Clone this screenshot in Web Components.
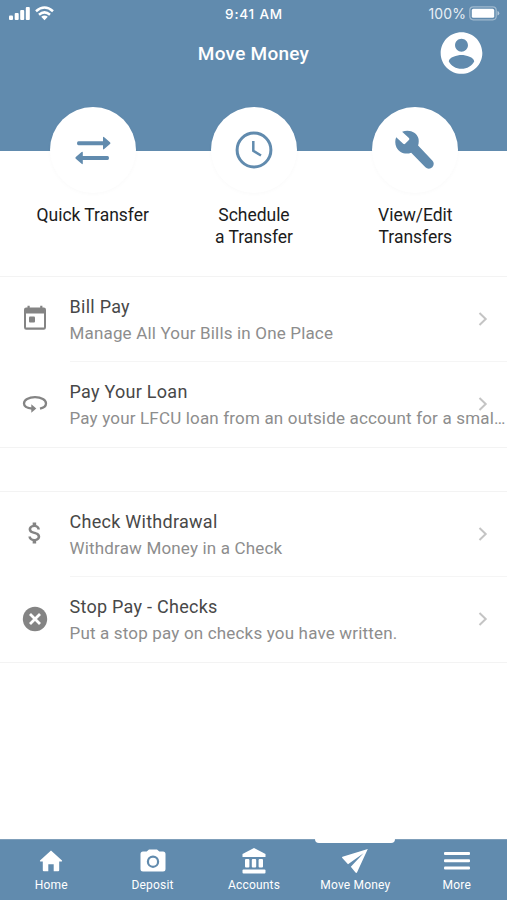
<!DOCTYPE html>
<html lang="en">
<head>
<meta charset="utf-8">
<title>Move Money</title>
<style>
html, body { margin: 0; height: 100%; }
body { background: #fff; font-family: Roboto, "Liberation Sans", sans-serif; overflow: hidden; }
</style>
</head>
<body>
<money-app></money-app>

<script>
const BLUE = '#618bae';

function define(name, html) {
  const template = document.createElement('template');
  template.innerHTML = html;
  customElements.define(name, class extends HTMLElement {
    constructor() {
      super();
      this.attachShadow({ mode: 'open' }).append(template.content.cloneNode(true));
    }
  });
}

define('status-bar', `
<style>
  :host { display: grid; grid-template-columns: 1fr auto 1fr; align-items: center; height: 28px; padding: 0 7px 0 8px; box-sizing: border-box; color: #fff; font: 500 13px/28px Inter, sans-serif; }
  .left, .right { display: flex; align-items: center; }
  .left { gap: 4px; }
  .right { justify-content: flex-end; gap: 3px; font-weight: 400; font-size: 14px; letter-spacing: .1px; color: #e8eff5; }
  .time { font-weight: 500; font-size: 13.500px; letter-spacing: .8px; }
  svg { display: block; margin-bottom: 2px; }
</style>
<div class="left">
  <svg width="23" height="15" viewBox="0 0 23 15" fill="#fff"><rect x="1" y="9.5" width="4" height="4.5" rx="1"/><rect x="6.7" y="7" width="4" height="7" rx="1"/><rect x="12.2" y="4" width="4" height="10" rx="1"/><rect x="17.8" y="1" width="4" height="13" rx="1"/></svg>
  <svg width="19" height="15" viewBox="0 0 19 15" fill="none" stroke="#fff" stroke-width="2.5"><path d="M1 5.300Q9.500-2.300 18 5.300M4 8.800Q9.500 4 15 8.800"/><path d="M6.2 10.8Q9.5 8.1 12.8 10.8L9.5 14.3Z" fill="#fff" stroke="none"/></svg>
</div>
<div class="time">9:41 AM</div>
<div class="right"><span>100%</span>
  <svg width="31" height="15" viewBox="0 0 31 15"><rect x=".8" y=".8" width="26.4" height="13" rx="3.5" fill="none" stroke="#9fb9ce" stroke-width="1.2"/><rect x="2.8" y="2.8" width="22.4" height="9" rx="1.6" fill="#fff"/><path d="M28.5 5v4.6q1.8-.6 1.8-2.3T28.5 5" fill="#b4c8d9"/></svg>
</div>`);

define('page-header', `
<style>
  :host { display: block; height: 151px; background: ${BLUE}; color: #fff; }
  .bar { display: grid; grid-template-columns: 1fr auto 1fr; align-items: center; height: 50px; padding: 0 20px; }
  h1 { margin: 0; font-weight: 500; font-size: 19px; line-height: 26px; letter-spacing: .25px; }
  svg { display: block; justify-self: end; margin-bottom: 1px; }
</style>
<status-bar></status-bar>
<div class="bar"><span></span><h1><slot></slot></h1>
  <svg width="51" height="50" viewBox="0 0 24 24" fill="#fff"><path d="M12 2C6.48 2 2 6.48 2 12s4.48 10 10 10 10-4.480 10-10S17.520 2 12 2zm0 3.200c1.700 0 3.100 1.400 3.100 3.100s-1.400 3.100-3.100 3.100-3.100-1.400-3.100-3.100 1.400-3.100 3.100-3.100zM12 19.600c-2.700 0-5-1.400-6.100-3.500 0-2 4-3.100 6.100-3.100s6.100 1.100 6.100 3.100c-1.100 2.100-3.400 3.500-6.100 3.500z"/></svg>
</div>`);

define('quick-action', `
<style>
  :host { display: flex; flex-direction: column; align-items: center; color: #1c1c1c; }
  .disc { display: grid; place-items: center; width: 86px; height: 86px; border-radius: 50%; background: #fff; box-shadow: 0 1px 4px rgba(0,0,0,.025); color: ${BLUE}; }
  .label { margin-top: 11px; font-size: 17.500px; line-height: 22px; text-align: center; letter-spacing: -.03px; }
</style>
<div class="disc"><slot name="icon"></slot></div>
<div class="label"><slot></slot></div>`);

define('menu-group', `
<style>
  :host { display: block; border-top: 1px solid #f3f3f3; border-bottom: 1px solid #f3f3f3; box-sizing: border-box; height: 172px; }
</style>
<slot></slot>`);

define('menu-row', `
<style>
  :host { display: grid; grid-template-columns: 69.500px minmax(0, 1fr); height: 85.500px; box-sizing: border-box; }
  .icon { display: grid; place-items: center; color: #848484; padding-bottom: 2px; }
  .body { display: grid; grid-template-columns: minmax(0, 1fr) 48px; grid-template-rows: 27px 26px; align-content: start; padding-top: 16px; }
  :host([divided]) .body { border-bottom: 1px solid #f5f5f5; }
  .title { color: #484848; font-size: 18px; line-height: 27px; letter-spacing: .27px; }
  .detail { grid-column: 1 / 3; grid-row: 2; color: #8d8d8d; font-size: 17px; line-height: 26px; letter-spacing: .17px; white-space: nowrap; }
  .chevron { grid-column: 2; grid-row: 1 / 3; justify-self: center; align-self: center; margin-bottom: 1px; }
</style>
<div class="icon"><slot name="icon"></slot></div>
<div class="body">
  <div class="title"><slot name="title"></slot></div>
  <div class="detail"><slot></slot></div>
  <svg class="chevron" width="12" height="16" viewBox="0 0 12 16" fill="none" stroke="#c4c4c4" stroke-width="2"><path d="M2.500 2l6.200 6-6.200 6"/></svg>
</div>`);

define('nav-item', `
<style>
  :host { position: relative; display: flex; flex-direction: column; align-items: center; padding: 8px 0 0 1px; color: #fff; }
  .icon { display: grid; place-items: center; height: 28px; }
  .label { font-size: 12px; line-height: 16px; margin-top: 2px; letter-spacing: .2px; }
  :host([active])::before { content: ""; position: absolute; top: -1px; left: 50%; width: 80px; height: 5px; margin-left: -40px; background: #fff; border-radius: 0 0 4px 4px; }
</style>
<div class="icon"><slot name="icon"></slot></div>
<div class="label"><slot></slot></div>`);

define('tab-bar', `
<style>
  :host { display: grid; grid-template-columns: repeat(5, 1fr); height: 61px; background: ${BLUE}; box-shadow: inset 0 1px #7f9fba; }
</style>
<slot></slot>`);

define('money-app', `
<style>
  :host { display: flex; flex-direction: column; width: 507px; height: 900px; }
  .actions { display: grid; grid-template-columns: repeat(3, 1fr); height: 168.500px; margin-top: -44px; padding: 0 11px 0 12px; flex: none; }
  page-header, menu-group { flex: none; }
  menu-group + menu-group { margin-top: 43px; }
  tab-bar { margin-top: auto; }
  svg { display: block; }
</style>
<page-header>Move Money</page-header>
<div class="actions">
  <quick-action>
    <svg slot="icon" width="38" height="30" viewBox="0 0 38 30" fill="currentColor"><path d="M3 8.200q0-1.900 1.500-1.900H29V2.800q0-1.500 1.200-.6L36 7.300q1 .9 0 1.800l-5.800 5q-1.200 1-1.200-.6V10.200H4.500Q3 10.200 3 8.200zM35 23q0-1.900-1.500-1.900H8.800v-3.500q0-1.500-1.200-.6L1.800 22q-1 .9 0 1.800l5.800 5q1.200.9 1.200-.6v-3.300h24.700q1.500 0 1.500-1.900z"/></svg>
    Quick Transfer</quick-action>
  <quick-action>
    <svg slot="icon" width="38" height="38" viewBox="0 0 38 38" fill="none" stroke="currentColor"><circle cx="19" cy="19" r="16.900" stroke-width="3"/><path d="M18.300 10v9.800l7.700 4.700" stroke-width="2.500"/></svg>
    Schedule<br>a Transfer</quick-action>
  <quick-action>
    <svg slot="icon" width="42" height="42" viewBox="0 0 42 42" fill="currentColor"><path d="M2.200 8.300l7 6.500q1 .8 1.900 0l3.800-3.900q.9-1 0-1.900L8.100 2.800C15-.2 22.500 3 24.300 9c.7 2.500.5 5-.2 7.600l14.200 14.800a4.800 4.800 0 0 1-6.900 6.900L17.200 23.700C11.500 26 5 23.600 2.500 18.500 1 15.300.8 11.500 2.200 8.300z"/></svg>
    View/Edit<br>Transfers</quick-action>
</div>
<menu-group>
  <menu-row divided>
    <svg slot="icon" width="24" height="26" viewBox="0 0 24 26" fill="currentColor"><path fill-rule="evenodd" d="M3.200 2.500h1.300V.7h2.200v1.800h10.500V.7h2.200v1.800h1.300q2.300 0 2.300 2.300v17.500q0 2.500-2.300 2.500H3.200Q1 24.800 1 22.300V4.800q0-2.300 2.200-2.300zM3 8.500v14h18v-14z"/><rect x="6" y="11.500" width="6" height="6" rx="1"/></svg>
    <span slot="title">Bill Pay</span>Manage All Your Bills in One Place</menu-row>
  <menu-row>
    <svg slot="icon" width="26" height="18" viewBox="0 0 26 18" fill="none" stroke="currentColor" stroke-width="2.300"><path d="M18 13.600c4-1 6-2.900 6-5.200 0-3.500-4.600-6.200-11-6.200S2 4.900 2 8.400c0 2.700 3.500 4.700 8.400 5.200"/><path d="M9.300 9.200v8.600l5-4.300z" fill="currentColor" stroke="none"/></svg>
    <span slot="title">Pay Your Loan</span>Pay your LFCU loan from an outside account for a smal…</menu-row>
</menu-group>
<menu-group>
  <menu-row divided>
    <svg slot="icon" width="28" height="28" viewBox="0 0 24 24" fill="currentColor"><path d="M11.800 10.900c-2.270-.59-3-1.200-3-2.150 0-1.090 1.010-1.850 2.700-1.850 1.780 0 2.440.85 2.500 2.100h2.210c-.07-1.720-1.120-3.300-3.210-3.810V3h-3v2.160c-1.940.42-3.500 1.680-3.500 3.610 0 2.310 1.910 3.460 4.700 4.130 2.500.6 3 1.480 3 2.410 0 .69-.49 1.790-2.700 1.790-2.060 0-2.870-.92-2.980-2.100h-2.200c.12 2.190 1.760 3.420 3.680 3.830V21h3v-2.150c1.950-.37 3.500-1.500 3.500-3.550 0-2.840-2.430-3.810-4.700-4.400z"/></svg>
    <span slot="title">Check Withdrawal</span>Withdraw Money in a Check</menu-row>
  <menu-row>
    <svg slot="icon" width="26" height="26" viewBox="0 0 26 26"><circle cx="13" cy="13" r="12.200" fill="currentColor"/><path d="M8 8l10 10M18 8L8 18" stroke="#fff" stroke-width="2.800"/></svg>
    <span slot="title">Stop Pay - Checks</span>Put a stop pay on checks you have written.</menu-row>
</menu-group>
<tab-bar>
  <nav-item><svg slot="icon" width="24" height="22" viewBox="0 0 24 22" fill="currentColor"><path d="M12 .5l11 10q.5 1-.5 1h-2.300v8.800q0 1-1 1h-4.500v-7H9.300v7H4.800q-1 0-1-1v-8.800H1.500q-1 0-.5-1z"/></svg>Home</nav-item>
  <nav-item><svg slot="icon" width="26" height="24" viewBox="0 0 26 24" fill="currentColor"><path fill-rule="evenodd" d="M9 .500h8l2.300 2H23q2.500 0 2.500 2.500v15q0 2.500-2.500 2.500H3Q.5 22.500 .5 20V5Q.5 2.500 3 2.500h3.700zM13 6.500a6.200 6.200 0 1 0 0 12.400 6.200 6.200 0 1 0 0-12.400z"/><circle cx="13" cy="12.700" r="4"/></svg>Deposit</nav-item>
  <nav-item><svg slot="icon" width="26" height="26" viewBox="0 0 26 26" fill="currentColor"><path d="M13 0l11.500 6v3h-23V6z"/><rect x="4" y="11" width="4.400" height="8.500" rx="1"/><rect x="10.800" y="11" width="4.400" height="8.500" rx="1"/><rect x="17.600" y="11" width="4.400" height="8.500" rx="1"/><rect x="1.500" y="21.500" width="23" height="4" rx="1"/></svg>Accounts</nav-item>
  <nav-item active><svg slot="icon" width="28" height="26" viewBox="0 0 28 26" fill="currentColor"><path d="M26.800 1L1.500 8.800q-1 .5-.2 1.300L7 16.200 22.500 5.200 9.800 18.700l4.700 5.800q1 .9 1.600-.3z"/></svg>Move Money</nav-item>
  <nav-item><svg slot="icon" width="26" height="20" viewBox="0 0 26 20" fill="currentColor"><rect y="1" width="26" height="3" rx="1"/><rect y="8.200" width="26" height="3" rx="1"/><rect y="15.500" width="26" height="3" rx="1"/></svg>More</nav-item>
</tab-bar>`);
</script>
</body>
</html>
